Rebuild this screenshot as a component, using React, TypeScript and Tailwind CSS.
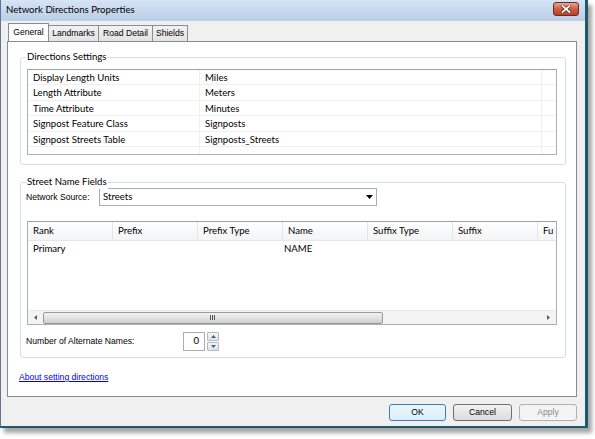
import React from "react";

const ui = "font-['Lato',sans-serif] text-[9.6px]";
const shell = "font-['Liberation_Sans',sans-serif] text-[8.6px]";

const settings = [
  ["Display Length Units", "Miles"],
  ["Length Attribute", "Meters"],
  ["Time Attribute", "Minutes"],
  ["Signpost Feature Class", "Signposts"],
  ["Signpost Streets Table", "Signposts_Streets"],
];

const columns = ["Rank", "Prefix", "Prefix Type", "Name", "Suffix Type", "Suffix", "Fu"];

function Tab({ label, active, w }: { label: string; active?: boolean; w: string }) {
  if (active) {
    return (
      <div
        className={`${w} ${shell} relative z-10 -mb-px flex h-[18px] items-center justify-center border border-b-0 border-[#898c95] bg-white text-black`}
      >
        {label}
      </div>
    );
  }
  return (
    <div
      className={`${w} ${shell} mt-[2px] flex h-[16px] items-center justify-center border border-b-0 border-l-0 border-[#898c95] bg-gradient-to-b from-[#f2f2f2] to-[#e3e3e3] text-black`}
    >
      {label}
    </div>
  );
}

function Group({ title, className, children }: { title: string; className: string; children: React.ReactNode }) {
  return (
    <div className={`relative rounded-[3px] border border-[#d5dfe5] ${className}`}>
      <span className={`${ui} absolute -top-[8px] left-[5px] bg-white px-[1px] leading-[14px] text-black`}>{title}</span>
      {children}
    </div>
  );
}

function Button({ label, w, primary, disabled }: { label: string; w: string; primary?: boolean; disabled?: boolean }) {
  return (
    <div
      className={`${w} ${shell} flex h-[17px] items-center justify-center rounded-[3px] border ${
        primary
          ? "border-[#3c7fb1] bg-gradient-to-b from-[#eaf6fd] to-[#d9f0fc] text-black"
          : disabled
            ? "border-[#adb2b5] bg-[#f4f4f4] text-[#8a8a8a]"
            : "border-[#707070] bg-gradient-to-b from-[#f2f2f2] to-[#dcdcdc] text-black"
      }`}
    >
      {label}
    </div>
  );
}

export default function App() {
  return (
    <div className="h-[439px] w-[595px] overflow-hidden bg-white">
      <div className="flex h-[428px] w-[588px] flex-col border-l border-r-[3px] border-b-2 border-l-[#60758c] border-r-[#1f5a6c] border-b-[#1f5a6c] shadow-[4px_5px_4px_rgba(0,0,0,0.35)]">
        {/* title bar */}
        <div className="flex h-[21px] shrink-0 items-center justify-between bg-gradient-to-b from-[#d6e4f4] to-[#b9cee7] pl-[5px] pr-[6px]">
          <span className={`${ui} text-[9.6px] text-black`}>Network Directions Properties</span>
          <div className="mt-[-4px] flex h-[14px] w-[26px] items-center justify-center rounded-[3px] border border-[#6b2b20] bg-gradient-to-b from-[#e8a493] via-[#cf5b42] to-[#b7402a]">
            <svg width="10" height="8" viewBox="0 0 10 8">
              <path d="M1.5 1 L8.5 7 M8.5 1 L1.5 7" stroke="#4a1a12" strokeWidth="3" strokeLinecap="square" />
              <path d="M1.5 1 L8.5 7 M8.5 1 L1.5 7" stroke="#ffffff" strokeWidth="1.8" strokeLinecap="square" />
            </svg>
          </div>
        </div>

        {/* body */}
        <div className="flex flex-1 flex-col bg-[#f0f0f0] pl-[6px] pt-[2px]">
          <div className="flex h-[18px] items-start pl-[1px]">
            <Tab label="General" active w="w-[41px]" />
            <Tab label="Landmarks" w="w-[50px]" />
            <Tab label="Road Detail" w="w-[54px]" />
            <Tab label="Shields" w="w-[35px]" />
          </div>

          <div className="flex h-[356px] w-[570px] flex-col border border-[#898c95] bg-white px-[12px] pt-[15px]">
            <Group title="Directions Settings" className="h-[108px] w-[546px] pl-[6px] pt-[11px]">
              <div className="h-[86px] w-[530px] overflow-hidden border border-[#abadb3] border-t-[#a0a0a0]">
                {settings.map(([k, v]) => (
                  <div key={k} className="flex h-[15.4px] border-b border-[#f0f0f0]">
                    <div className={`${ui} w-[172px] border-r border-[#f0f0f0] pl-[5px] leading-[15px] text-black`}>{k}</div>
                    <div className={`${ui} w-[342px] border-r border-[#f0f0f0] pl-[5px] leading-[15px] text-black`}>{v}</div>
                  </div>
                ))}
                <div className="flex h-[10px]">
                  <div className="w-[172px] border-r border-[#f0f0f0]" />
                  <div className="w-[342px] border-r border-[#f0f0f0]" />
                </div>
              </div>
            </Group>

            <Group title="Street Name Fields" className="mt-[17px] h-[176px] w-[546px] pl-[5px] pt-[5px]">
              <div className="flex items-center">
                <span className={`${shell} w-[73px] whitespace-nowrap text-black`}>Network Source:</span>
                <div className="flex h-[18px] w-[278px] items-center justify-between border border-[#abadb3] bg-white pl-[3px] pr-[3px]">
                  <span className={`${ui} text-black`}>Streets</span>
                  <svg width="7" height="4" viewBox="0 0 7 4">
                    <path d="M0 0 H7 L3.5 4 Z" fill="#000" />
                  </svg>
                </div>
              </div>

              <div className="ml-[1px] mt-[15px] flex h-[104px] w-[530px] flex-col border border-[#abadb3] border-t-[#a0a0a0]">
                <div className="flex h-[19px] border-b border-[#e3e6ea] bg-gradient-to-b from-white to-[#f3f4f6]">
                  {columns.map((c, i) => (
                    <div
                      key={c}
                      className={`${ui} flex h-full shrink-0 items-center border-r border-[#e3e5e8] pl-[5px] text-black ${
                        i === 6 ? "w-[20px] border-r-0" : "w-[85px]"
                      }`}
                    >
                      {c}
                    </div>
                  ))}
                </div>
                <div className="flex h-[17px] items-center">
                  <span className={`${ui} w-[256px] pl-[5px] text-black`}>Primary</span>
                  <span className={`${ui} text-black`}>NAME</span>
                </div>
                <div className="flex-1" />
                {/* horizontal scrollbar */}
                <div className="flex h-[14px] items-center border-t border-[#e8e8e8] bg-[#f4f4f4]">
                  <div className="flex w-[15px] justify-center">
                    <svg width="3" height="5" viewBox="0 0 3 5">
                      <path d="M3 0 V5 L0 2.5 Z" fill="#5e5e5e" />
                    </svg>
                  </div>
                  <div className="flex h-[12px] w-[340px] items-center justify-center rounded-[2px] border border-[#9a9a9a] bg-gradient-to-b from-[#f1f1f1] via-[#e2e2e2] to-[#cfcfcf]">
                    <svg width="6" height="5" viewBox="0 0 6 5">
                      <path d="M0.5 0 V5 M2.5 0 V5 M4.5 0 V5" stroke="#555" strokeWidth="1" />
                    </svg>
                  </div>
                  <div className="flex-1" />
                  <div className="flex w-[15px] justify-center">
                    <svg width="3" height="5" viewBox="0 0 3 5">
                      <path d="M0 0 V5 L3 2.5 Z" fill="#5e5e5e" />
                    </svg>
                  </div>
                </div>
              </div>

              <div className="mt-[7px] flex items-center">
                <span className={`${shell} w-[157px] whitespace-nowrap text-black`}>Number of Alternate Names:</span>
                <div className={`${ui} flex h-[19px] w-[22px] items-center justify-end border border-[#abadb3] bg-white pr-[5px] text-black`}>0</div>
                <div className="ml-[2px] flex flex-col gap-[1px]">
                  <div className="flex h-[9px] w-[12px] items-center justify-center rounded-[1px] border border-[#b4bac1] bg-gradient-to-b from-[#f3f5f7] to-[#dfe4e9]">
                    <svg width="5" height="3" viewBox="0 0 5 3">
                      <path d="M0 3 H5 L2.5 0 Z" fill="#4d6185" />
                    </svg>
                  </div>
                  <div className="flex h-[9px] w-[12px] items-center justify-center rounded-[1px] border border-[#b4bac1] bg-gradient-to-b from-[#f3f5f7] to-[#dfe4e9]">
                    <svg width="5" height="3" viewBox="0 0 5 3">
                      <path d="M0 0 H5 L2.5 3 Z" fill="#4d6185" />
                    </svg>
                  </div>
                </div>
              </div>
            </Group>

            <span className={`${shell} mt-[13px] -ml-[1px] text-[#0000ff] underline`}>About setting directions</span>
          </div>

          <div className="mt-[7px] flex w-[570px] justify-end gap-[7px] pr-0">
            <Button label="OK" w="w-[57px]" primary />
            <Button label="Cancel" w="w-[59px]" />
            <Button label="Apply" w="w-[58px]" disabled />
          </div>
        </div>
      </div>
    </div>
  );
}
